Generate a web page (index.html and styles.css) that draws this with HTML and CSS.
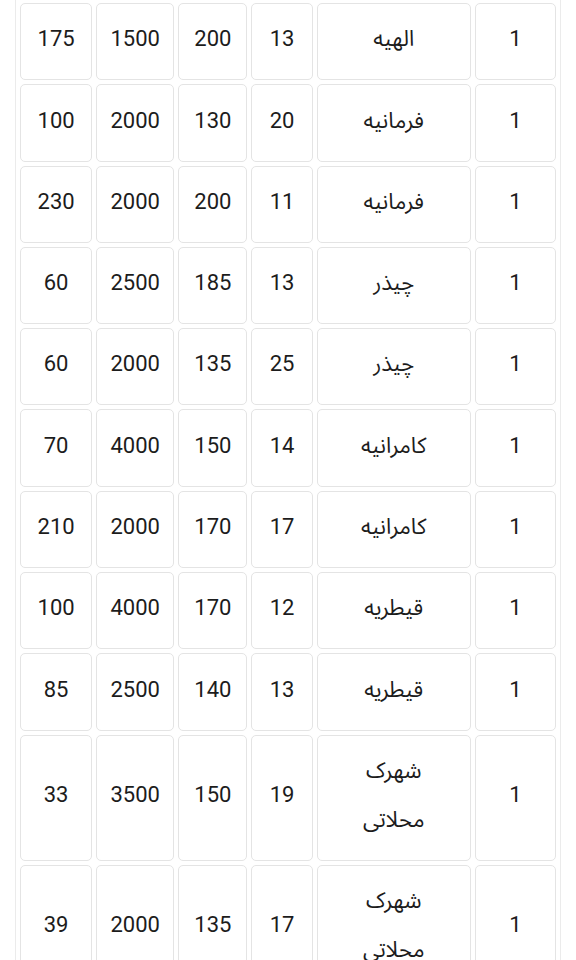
FILE: index.html
```html
<!DOCTYPE html>
<html lang="fa">
<head>
<meta charset="utf-8">
<link rel="stylesheet" href="styles.css">
</head>
<body>
<table class="grid" dir="rtl">
  <colgroup>
    <col class="w-count"><col class="w-name"><col class="w-a"><col class="w-b"><col class="w-c"><col class="w-d">
  </colgroup>
  <tbody>
    <tr><td>1</td><td class="name">الهیه</td><td>13</td><td>200</td><td>1500</td><td>175</td></tr>
    <tr><td>1</td><td class="name">فرمانیه</td><td>20</td><td>130</td><td>2000</td><td>100</td></tr>
    <tr><td>1</td><td class="name">فرمانیه</td><td>11</td><td>200</td><td>2000</td><td>230</td></tr>
    <tr><td>1</td><td class="name">چیذر</td><td>13</td><td>185</td><td>2500</td><td>60</td></tr>
    <tr><td>1</td><td class="name">چیذر</td><td>25</td><td>135</td><td>2000</td><td>60</td></tr>
    <tr><td>1</td><td class="name">کامرانیه</td><td>14</td><td>150</td><td>4000</td><td>70</td></tr>
    <tr><td>1</td><td class="name">کامرانیه</td><td>17</td><td>170</td><td>2000</td><td>210</td></tr>
    <tr><td>1</td><td class="name">قیطریه</td><td>12</td><td>170</td><td>4000</td><td>100</td></tr>
    <tr><td>1</td><td class="name">قیطریه</td><td>13</td><td>140</td><td>2500</td><td>85</td></tr>
    <tr><td>1</td><td class="name">شهرک محلاتی</td><td>19</td><td>150</td><td>3500</td><td>33</td></tr>
    <tr><td>1</td><td class="name">شهرک محلاتی</td><td>17</td><td>135</td><td>2000</td><td>39</td></tr>
  </tbody>
</table>
</body>
</html>
```

FILE: styles.css
```css
html, body {
  margin: 0;
  padding: 0;
  background: #ffffff;
}

body {
  font-family: Roboto, "Noto Sans Arabic", "DejaVu Sans", sans-serif;
  color: #1c1c1c;
  overflow: hidden;
}

.grid {
  margin: -2px 0 0 15px;
  width: 546px;
  table-layout: fixed;
  border-collapse: separate;
  border-spacing: 4px;
  border: 1px solid #ebebeb;
  font-size: 22px;
}

.w-count { width: 81px; }
.w-name { width: 154px; }
.w-a { width: 61px; }
.w-b { width: 69px; }
.w-c { width: 78px; }
.w-d { width: 72px; }

.grid td {
  border: 1px solid #e4e4e4;
  border-radius: 5px;
  padding: 11.3px 8px 15.3px;
  line-height: 48.7px;
  text-align: center;
  vertical-align: middle;
}

.grid td.name {
  padding-left: 20px;
  padding-right: 20px;
}
```
